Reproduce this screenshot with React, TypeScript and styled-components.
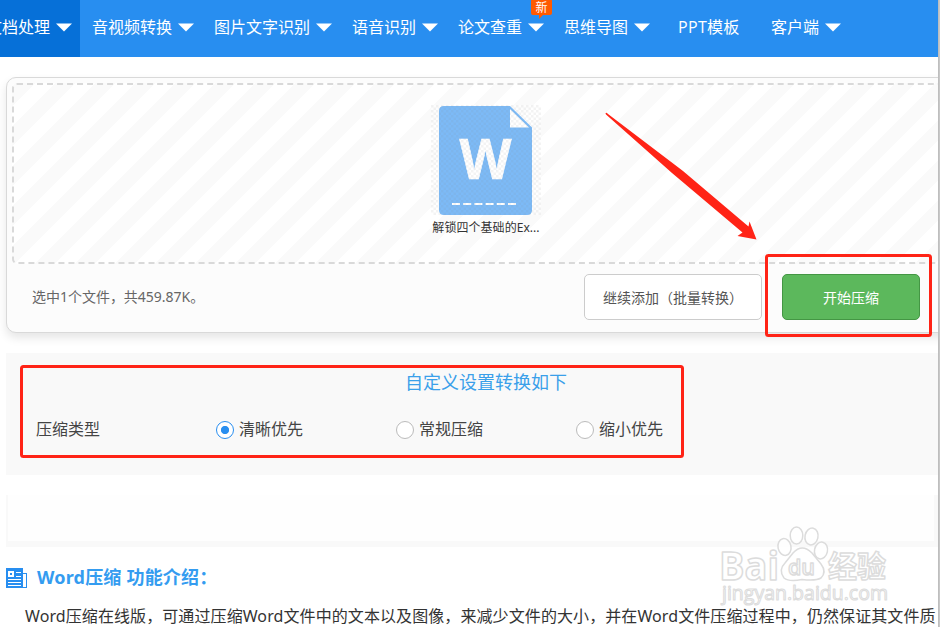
import React from "react";
import styled, { createGlobalStyle, css } from "styled-components";

const Global = createGlobalStyle`
  * { box-sizing: border-box; }
  html, body { margin: 0; padding: 0; background: #fff; overflow: hidden; }
  body { font-family: "Noto Sans", "Noto Sans CJK SC", sans-serif; color: #333; }
`;

const Screen = styled.div`
  position: relative;
  width: 940px;
  height: 627px;
  overflow: hidden;
  display: flex;
  background: #fff;
`;

const Page = styled.div`
  width: 938px;
  height: 627px;
  overflow: hidden;
  flex: none;
`;

const WindowEdge = styled.div`
  width: 2px;
  flex: none;
  background: linear-gradient(90deg, #b9b9b9, #cdcdcd);
`;

const Nav = styled.nav`
  height: 57px;
  display: flex;
  background: #288ef0;
  color: #fff;
  font-size: 16px;
`;

const NavItem = styled.div<{ $active?: boolean; $plain?: boolean }>`
  display: flex;
  align-items: center;
  flex: none;
  gap: 6px;
  height: 57px;
  padding: 0 8px 2px 12px;
  position: relative;
  white-space: nowrap;
  ${(p) => p.$active && css`
    width: 80px;
    justify-content: flex-end;
    background: #0670d8;
    overflow: hidden;
    padding-left: 0;
  `}
  ${(p) => p.$plain && css`
    width: 101px;
    padding-left: 20px;
  `}
`;

const NavLabel = styled.span`
  line-height: 24px;
  margin-bottom: 2px;
  font-family: "Open Sans", "Noto Sans CJK SC", sans-serif;
  flex: none;
`;

const PlainLabel = styled(NavLabel)`
  letter-spacing: 0.3px;
`;

const Caret = styled.svg`
  width: 16px;
  height: 9px;
  flex: none;
`;

const NewBadge = styled.span`
  position: absolute;
  left: 85px;
  top: -1px;
  width: 21px;
  height: 16px;
  border-radius: 2px;
  background: #ff5a00;
  font-size: 12px;
  line-height: 18px;
  text-align: center;
  &::after {
    content: "";
    position: absolute;
    left: 8px;
    top: 16px;
    border-top: 4px solid #ff5a00;
    border-right: 4px solid transparent;
  }
`;

const Content = styled.main`
  width: 960px;
  margin: 20px 0 0 6px;
`;

const UploadPanel = styled.section`
  height: 256px;
  padding: 5px;
  border: 1px solid #d9d9d9;
  border-radius: 10px;
  background: #fcfcfc;
  box-shadow: 0 5px 10px rgba(0, 0, 0, 0.1);
`;

const DropZone = styled.div`
  height: 181px;
  border: 2px dashed #d9d9d9;
  border-radius: 5px;
  display: flex;
  flex-direction: column;
  align-items: center;
  padding-top: 20px;
  background: linear-gradient(135deg, #fafafa 25%, #fff 25%, #fff 50%, #fafafa 50%, #fafafa 75%, #fff 75%) 0 0 / 40px 40px;
`;

const FileThumb = styled.svg`
  width: 110px;
  height: 110px;
  flex: none;
`;

const FileName = styled.div`
  font-size: 12px;
  line-height: 18px;
  margin-top: 4px;
  letter-spacing: 0.05px;
  white-space: nowrap;
`;

const ActionBar = styled.div`
  height: 66px;
  display: flex;
  align-items: center;
  padding: 0 40px 0 20px;
`;

const Summary = styled.span`
  flex: 1;
  font-size: 14px;
  letter-spacing: -0.02px;
  color: #666;
  line-height: 20px;
`;

const Button = styled.button<{ $primary?: boolean }>`
  width: ${(p) => (p.$primary ? 138 : 178)}px;
  height: 46px;
  padding: 0;
  margin-left: ${(p) => (p.$primary ? 20 : 0)}px;
  border: 1px solid ${(p) => (p.$primary ? "#449644" : "#ccc")};
  border-radius: 5px;
  background: ${(p) => (p.$primary ? "#5cb85c" : "#fff")};
  color: ${(p) => (p.$primary ? "#fff" : "#555")};
  font: 14px/20px "Noto Sans CJK SC", sans-serif;
  white-space: nowrap;
`;

const Settings = styled.section`
  margin-top: 20px;
  height: 122px;
  background: #f9f9f9;
  padding-top: 17px;
`;

const SettingsTitle = styled.h2`
  margin: 0;
  font-size: 18px;
  line-height: 24px;
  font-weight: 400;
  text-align: center;
  color: #3aa0ea;
`;

const OptionRow = styled.div`
  display: grid;
  grid-template-columns: 180px 180px 180px 180px;
  padding-left: 30px;
  margin-top: 23px;
  height: 24px;
  align-items: center;
  font-size: 16px;
  line-height: 24px;
  color: #444;
`;

const Option = styled.label`
  display: flex;
  align-items: center;
  gap: 5px;
`;

const OptionText = styled.span`
  margin-bottom: 2px;
`;

const Radio = styled.span<{ $on?: boolean }>`
  width: 18px;
  height: 18px;
  border-radius: 50%;
  border: 1px solid ${(p) => (p.$on ? "#288ef0" : "#bbb")};
  background: ${(p) => (p.$on ? "radial-gradient(circle, #288ef0 0 3.7px, #fff 4.5px)" : "#fff")};
`;

const AdFrame = styled.div`
  margin-top: 20px;
  width: 932px;
  height: 52px;
  border: solid #f9f9f9;
  border-width: 0 4px 6px 2px;
  background: #fefefe;
`;

const IntroHeading = styled.h3`
  display: flex;
  align-items: center;
  gap: 10px;
  margin: 17px 0 0;
  height: 26px;
  font-size: 18px;
  font-weight: 700;
  color: #349cf0;
  white-space: nowrap;
`;

const HeadingText = styled.span`
  letter-spacing: 0.2px;
  line-height: 26px;
  margin-bottom: 1px;
`;

const NewsIcon = styled.svg`
  width: 21px;
  height: 20px;
  margin-top: 2px;
  flex: none;
`;

const IntroText = styled.p`
  margin: 13px 0 0 19px;
  font-size: 16px;
  line-height: 26px;
  white-space: nowrap;
  letter-spacing: 0.09px;
`;

const Overlay = styled.svg`
  position: absolute;
  left: 0;
  top: 0;
  width: 940px;
  height: 627px;
  pointer-events: none;
`;

const Arrow = () => (
  <Caret viewBox="0 0 16 9"><path d="M0 .5H16L8 8.5Z" fill="#fff" /></Caret>
);

const menus = [
  { label: "音视频转换" },
  { label: "图片文字识别" },
  { label: "语音识别" },
  { label: "论文查重", badge: "新" },
  { label: "思维导图" },
];

const options = ["清晰优先", "常规压缩", "缩小优先"];

export default function App() {
  return (
    <Screen>
      <Global />
      <Page>
        <Nav>
          <NavItem $active><NavLabel>文档处理</NavLabel><Arrow /></NavItem>
          {menus.map((m) => (
            <NavItem key={m.label}>
              <NavLabel>{m.label}</NavLabel><Arrow />
              {m.badge && <NewBadge>{m.badge}</NewBadge>}
            </NavItem>
          ))}
          <NavItem $plain><PlainLabel>PPT模板</PlainLabel></NavItem>
          <NavItem><NavLabel>客户端</NavLabel><Arrow /></NavItem>
        </Nav>
        <Content>
          <UploadPanel>
            <DropZone>
              <FileThumb viewBox="0 0 110 110">
                <defs>
                  <pattern id="check" width="5" height="5" patternUnits="userSpaceOnUse">
                    <path d="M0 0H2.500V2.500H0ZM2.500 2.500H5V5H2.500Z" fill="#888" fillOpacity=".1" />
                  </pattern>
                </defs>
                <rect width="110" height="110" fill="#fff" fillOpacity=".6" />
                <path d="M13 1H79L101 22.500V105Q101 110 96 110H13Q8 110 8 105V6Q8 1 13 1Z" fill="#7cbaf7" />
                <path d="M79 4V22.500H98Z" fill="#fff" />
                <text x="54.500" y="74" textAnchor="middle" fontFamily="Open Sans" fontWeight="700" fontSize="55" fill="#fff" stroke="#fff" strokeWidth=".6" textLength="52" lengthAdjust="spacingAndGlyphs">W</text>
                <path d="M21 99H85" stroke="#fff" strokeWidth="2" strokeDasharray="8 3.200" />
                <rect width="110" height="110" fill="url(#check)" />
              </FileThumb>
              <FileName>解锁四个基础的Ex...</FileName>
            </DropZone>
            <ActionBar>
              <Summary>选中1个文件，共459.87K。</Summary>
              <Button>继续添加（批量转换）</Button>
              <Button $primary>开始压缩</Button>
            </ActionBar>
          </UploadPanel>
          <Settings>
            <SettingsTitle>自定义设置转换如下</SettingsTitle>
            <OptionRow>
              <OptionText>压缩类型</OptionText>
              {options.map((o, i) => (
                <Option key={o}><Radio $on={i === 0} /><OptionText>{o}</OptionText></Option>
              ))}
            </OptionRow>
          </Settings>
          <AdFrame />
          <IntroHeading>
            <NewsIcon viewBox="0 0 21 20">
              <path d="M0 0H17V20H0ZM17 5H21V20H17Z" fill="#288ef0" />
              <path d="M2 3H8V9H2ZM10 4H15V5H10ZM10 8H15V9H10ZM2 11H15V12H2ZM2 14H15V15H2ZM2 17H15V18H2ZM17 6H20V19H17Z" fill="#fff" />
              <path d="M4 5H6V7H4Z" fill="#288ef0" />
            </NewsIcon>
            <HeadingText>Word压缩 功能介绍：</HeadingText>
          </IntroHeading>
          <IntroText>Word压缩在线版，可通过压缩Word文件中的文本以及图像，来减少文件的大小，并在Word文件压缩过程中，仍然保证其文件质</IntroText>
        </Content>
      </Page>
      <WindowEdge />
      <Overlay viewBox="0 0 940 627">
        <g fill="none" stroke="#ff2316" strokeWidth="3">
          <rect x="766.500" y="255.500" width="164" height="80" rx="2" />
          <rect x="21.500" y="366.500" width="661" height="90" rx="2" />
        </g>
        <path d="M605.500 113.500Q606 112 608 114L683 171L748.500 226.500L749.500 221.500L756.500 239.500L737.500 236L742.500 232.500L672 173L606 114.500Z" fill="#ff2316" />
        <g fill="#fff" fillOpacity=".8" stroke="#dcdcdc" strokeWidth="1.500" strokeLinejoin="round">
          <ellipse cx="784.500" cy="547" rx="6.500" ry="8.500" transform="rotate(-12 784.500 547)" />
          <ellipse cx="796.500" cy="535.500" rx="6.300" ry="8.500" />
          <ellipse cx="811.500" cy="536.500" rx="6.500" ry="8.500" transform="rotate(12 811.500 536.500)" />
          <ellipse cx="821" cy="550.500" rx="6.500" ry="8.500" transform="rotate(12 821 550.500)" />
          <path d="M793 553Q802 543 812 553L821 564Q827 572 821 578Q816 581 802 579.500Q789 582 784 578Q778 570 785 563Z" />
          <g fontFamily="Open Sans" fontWeight="700">
            <text x="719" y="579.500" fontSize="39" textLength="60" lengthAdjust="spacingAndGlyphs">Bai</text>
            <text x="788" y="575" fontSize="22" fontWeight="600" textLength="27" lengthAdjust="spacingAndGlyphs">du</text>
            <text x="828" y="577" fontSize="30" fontFamily="Noto Sans CJK SC" textLength="58" lengthAdjust="spacingAndGlyphs">经验</text>
          </g>
          <text x="722" y="600" fontSize="20" strokeWidth="1.100" fontFamily="Open Sans" textLength="166" lengthAdjust="spacingAndGlyphs">jingyan.baidu.com</text>
        </g>
      </Overlay>
    </Screen>
  );
}
